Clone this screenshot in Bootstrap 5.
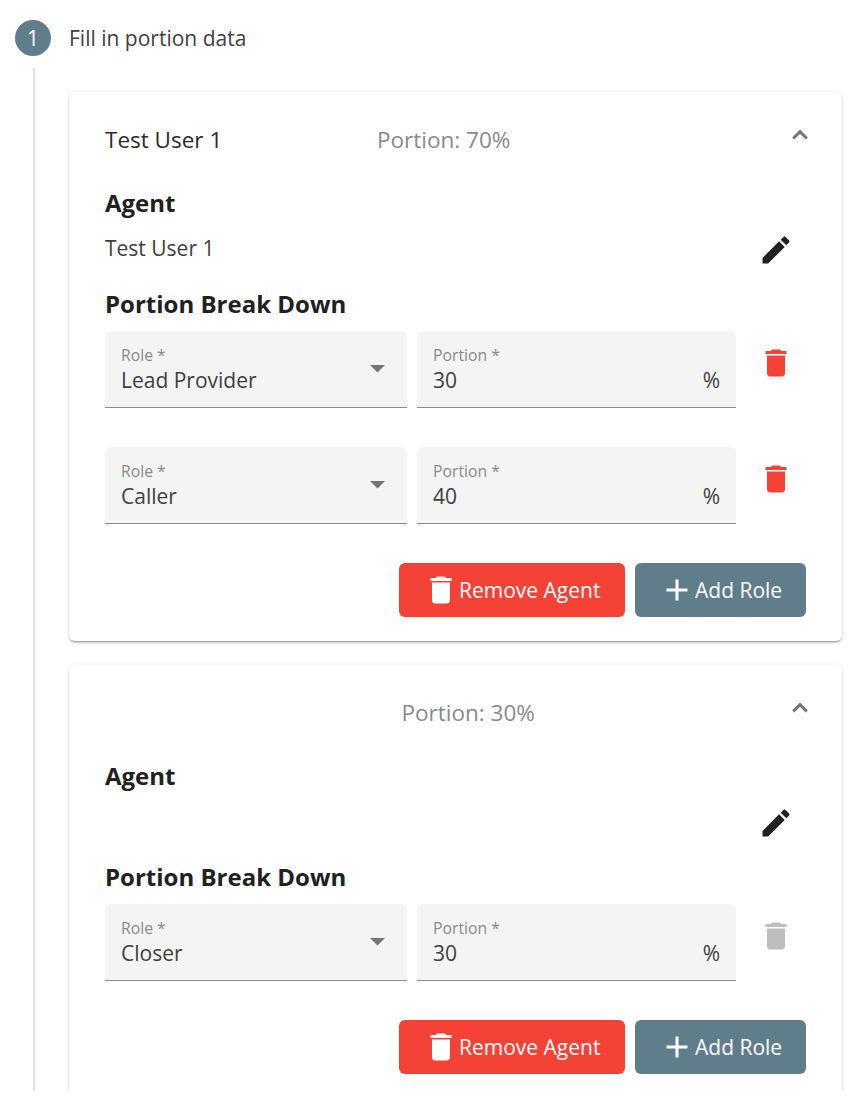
<!DOCTYPE html>
<html lang="en">
<head>
<meta charset="utf-8">
<meta name="viewport" content="width=device-width, initial-scale=1">
<title>Portion data</title>
<link href="https://cdn.jsdelivr.net/npm/bootstrap@5.3.0/dist/css/bootstrap.min.css" rel="stylesheet">
<style>
  body { font-family: "Open Sans", sans-serif; font-size: 21px; font-weight: 400; line-height: 30px; color: #404040; background: #fff; }
  .stepper { height: 1091px; padding-left: 15px; overflow: hidden; }
  .step-head { height: 68px; padding-top: 20px; gap: 18px; }
  .step-num { width: 36px; height: 36px; background: #607d8b; }
  .step-label { padding-top: 3px; }
  .step-body { margin-left: 18px; padding: 24px 24px 0 34px; border-left: 2px solid #e0e0e0; gap: 24px; min-height: 1023px; }
  .panel { border-radius: 6px; padding: 0 36px 24px; background: #fff; box-shadow: 0 3px 1px -2px rgba(0,0,0,.2), 0 2px 2px 0 rgba(0,0,0,.14), 0 1px 5px 0 rgba(0,0,0,.12); }
  .panel-head { height: 95px; font-size: 22.5px; }
  .agent-name { width: 272px; color: #2c2c2c; }
  .agent-name.unset { width: 296.5px; }
  .portion-total { color: #8a8a8a; }
  .chevron { margin: 0 -2px 10px 0; }
  .section-title { font-size: 24px; line-height: 32px; font-weight: 700; margin: 0; color: #212121; }
  .agent-row { height: 69px; padding-top: 1px; }
  .agent-row > div { height: 56px; }
  .icon-btn { width: 60px; height: 60px; border: 0; background: none; padding: 0; flex: none; color: #212121; }
  .icon-btn.danger { color: #f44336; }
  .icon-btn.off { color: #bdbdbd; }
  .role-row .icon-btn { margin-top: 2px; }
  .role-list { padding-top: 11px; }
  .role-row { gap: 10px; margin-bottom: 39px; }
  .field { height: 77px; padding: 13px 16px 0; background: #f4f4f4; border-bottom: 1px solid #8c8c8c; border-radius: 6px 6px 0 0; }
  .field.role { width: 302px; }
  .field.share { width: 319px; }
  .field-label { font-size: 15.75px; line-height: 22px; color: #8a8a8a; }
  .field-value { line-height: 28px; }
  .caret { position: absolute; right: 22px; top: 34px; }
  .acts { gap: 10px; }
  .act { height: 54px; border: 0; border-radius: 6px; padding: 0 24px; color: #fff; line-height: 54px; }
  .act.remove { background: #f44336; width: 226px; }
  .act.add { background: #607d8b; width: 171px; }
  svg { display: block; flex: none; }
</style>
</head>
<body>
<svg width="0" height="0" class="position-absolute" aria-hidden="true">
  <symbol id="trash" viewBox="0 0 24 24"><path fill="currentColor" d="M6 19c0 1.100.9 2 2 2h8c1.100 0 2-.9 2-2V7H6v12zM19 4h-3.500l-1-1h-5l-1 1H5v2h14V4z"/></symbol>
  <symbol id="pencil" viewBox="0 0 24 24"><path fill="currentColor" d="M3 17.250V21h3.750L17.810 9.940l-3.750-3.750L3 17.250zM20.710 7.040c.39-.39.39-1.020 0-1.410l-2.340-2.340c-.39-.39-1.020-.39-1.410 0l-1.830 1.830 3.750 3.750 1.830-1.830z"/></symbol>
  <symbol id="plus" viewBox="0 0 24 24"><path fill="currentColor" d="M19 13h-6v6h-2v-6H5v-2h6V5h2v6h6v2z"/></symbol>
</svg>
<main class="stepper">
  <div class="step-head d-flex">
    <div class="step-num rounded-circle text-white d-flex align-items-center justify-content-center">1</div>
    <div class="step-label">Fill in portion data</div>
  </div>
  <div class="step-body d-flex flex-column">

    <section class="panel">
      <div class="panel-head d-flex align-items-center">
        <div class="agent-name">Test User 1</div>
        <div class="portion-total">Portion: 70%</div>
        <svg class="chevron ms-auto" width="16" height="12" viewBox="0 0 16 12"><path d="M1.200 9.500 8 2.700l6.800 6.800" fill="none" stroke="#757575" stroke-width="3"/></svg>
      </div>
      <h2 class="section-title">Agent</h2>
      <div class="agent-row d-flex justify-content-between">
        <div class="d-flex align-items-center">Test User 1</div>
        <button class="icon-btn d-flex align-items-center justify-content-center" aria-label="Edit"><svg width="36" height="36"><use href="#pencil"/></svg></button>
      </div>
      <h2 class="section-title">Portion Break Down</h2>
      <div class="role-list">
        <div class="role-row d-flex">
          <div class="field role position-relative"><div class="field-label">Role *</div><div class="field-value">Lead Provider</div><svg class="caret" width="15" height="8"><path d="M0 0h15L7.500 7.500z" fill="#757575"/></svg></div>
          <div class="field share"><div class="field-label">Portion *</div><div class="field-value d-flex justify-content-between"><span>30</span><span>%</span></div></div>
          <button class="icon-btn danger d-flex align-items-center justify-content-center" aria-label="Delete"><svg width="36" height="36"><use href="#trash"/></svg></button>
        </div>
        <div class="role-row d-flex">
          <div class="field role position-relative"><div class="field-label">Role *</div><div class="field-value">Caller</div><svg class="caret" width="15" height="8"><path d="M0 0h15L7.500 7.500z" fill="#757575"/></svg></div>
          <div class="field share"><div class="field-label">Portion *</div><div class="field-value d-flex justify-content-between"><span>40</span><span>%</span></div></div>
          <button class="icon-btn danger d-flex align-items-center justify-content-center" aria-label="Delete"><svg width="36" height="36"><use href="#trash"/></svg></button>
        </div>
      </div>
      <div class="d-flex justify-content-end acts">
        <button class="act remove d-flex align-items-center text-nowrap"><svg width="36" height="36"><use href="#trash"/></svg>Remove Agent</button>
        <button class="act add d-flex align-items-center text-nowrap"><svg width="36" height="36"><use href="#plus"/></svg>Add Role</button>
      </div>
    </section>

    <section class="panel">
      <div class="panel-head d-flex align-items-center">
        <div class="agent-name unset"></div>
        <div class="portion-total">Portion: 30%</div>
        <svg class="chevron ms-auto" width="16" height="12" viewBox="0 0 16 12"><path d="M1.200 9.500 8 2.700l6.800 6.800" fill="none" stroke="#757575" stroke-width="3"/></svg>
      </div>
      <h2 class="section-title">Agent</h2>
      <div class="agent-row d-flex justify-content-end">
        <button class="icon-btn d-flex align-items-center justify-content-center" aria-label="Edit"><svg width="36" height="36"><use href="#pencil"/></svg></button>
      </div>
      <h2 class="section-title">Portion Break Down</h2>
      <div class="role-list">
        <div class="role-row d-flex">
          <div class="field role position-relative"><div class="field-label">Role *</div><div class="field-value">Closer</div><svg class="caret" width="15" height="8"><path d="M0 0h15L7.500 7.500z" fill="#757575"/></svg></div>
          <div class="field share"><div class="field-label">Portion *</div><div class="field-value d-flex justify-content-between"><span>30</span><span>%</span></div></div>
          <button class="icon-btn off d-flex align-items-center justify-content-center" aria-label="Delete" disabled><svg width="36" height="36"><use href="#trash"/></svg></button>
        </div>
      </div>
      <div class="d-flex justify-content-end acts">
        <button class="act remove d-flex align-items-center text-nowrap"><svg width="36" height="36"><use href="#trash"/></svg>Remove Agent</button>
        <button class="act add d-flex align-items-center text-nowrap"><svg width="36" height="36"><use href="#plus"/></svg>Add Role</button>
      </div>
    </section>

  </div>
</main>
<script src="https://cdn.jsdelivr.net/npm/bootstrap@5.3.0/dist/js/bootstrap.bundle.min.js"></script>
</body>
</html>
